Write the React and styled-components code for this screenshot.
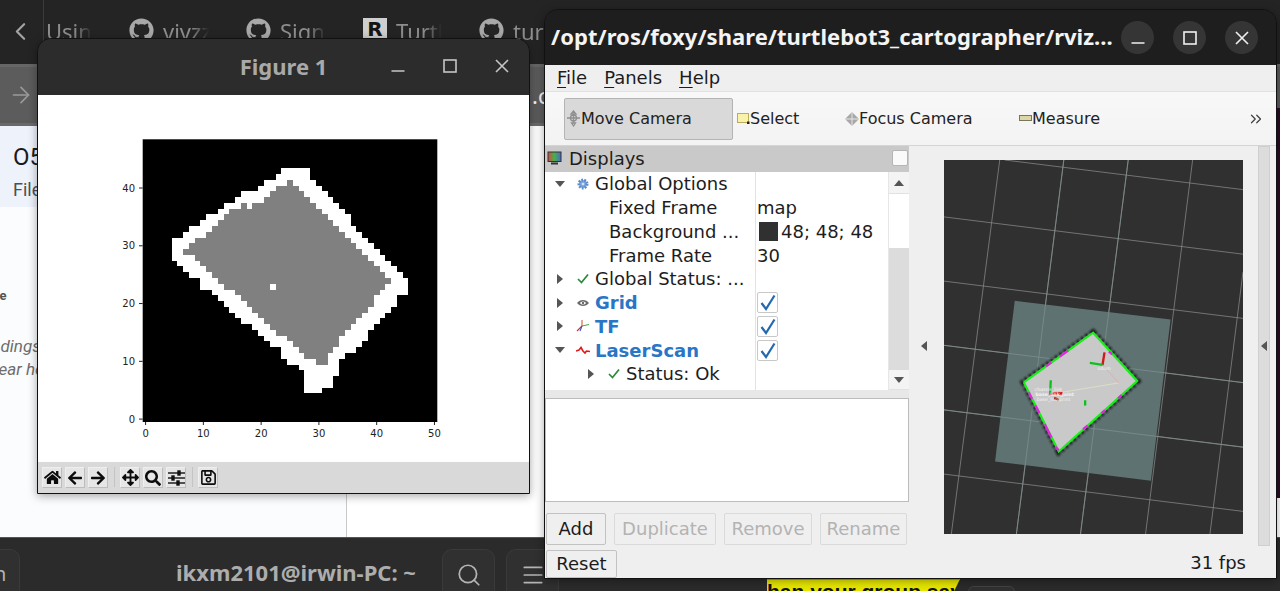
import React from 'react';
import styled, { createGlobalStyle } from 'styled-components';
import { FaGithub, FaHome, FaArrowLeft, FaArrowRight, FaArrowsAlt, FaSearch, FaRegSave } from 'react-icons/fa';
import { ChevronLeft, ChevronsRight, ArrowRight, Search, Menu } from 'lucide-react';

const GlobalStyle = createGlobalStyle`
	html, body {
		margin: 0;
		padding: 0;
		background: #242424;
	}
`;

const QT_FONT = '"DejaVu Sans", "Liberation Sans", sans-serif';
const UI_FONT = '"Noto Sans", "Open Sans", sans-serif';

const Desktop = styled.div`
	position: relative;
	width: 1280px;
	height: 591px;
	overflow: hidden;
	display: grid;
	grid-template-rows: 64px 62px 1fr 54px;
	font-family: ${UI_FONT};
`;

// Browser behind the windows
const TabBar = styled.div`
	display: flex;
	align-items: flex-start;
	background: #242424;
`;

const BackSlot = styled.div`
	width: 44px;
	height: 64px;
	flex: none;
	display: flex;
	align-items: flex-start;
	padding: 17px 0 0 6px;
	box-sizing: border-box;
	border-right: 1px solid #3b3b3b;
	color: #a4a4a4;
`;

const Tab = styled.div`
	width: ${props => props.$w}px;
	flex: none;
	height: 40px;
	padding-top: 16px;
	padding-left: ${props => props.$pad || 0}px;
	box-sizing: border-box;
	display: flex;
	gap: 9px;
	color: #8e8e8e;
	font-size: 22px;
	line-height: 30px;
	overflow: hidden;
	white-space: nowrap;
	svg {
		flex: none;
		margin-top: 2px;
		color: #a8a8a8;
	}
`;

const TabText = styled.span`
	width: 46px;
	flex: none;
	overflow: hidden;
	-webkit-mask-image: linear-gradient(90deg, #000 62%, transparent 100%);
	mask-image: linear-gradient(90deg, #000 62%, transparent 100%);
`;

const LogoBadge = styled.span`
	flex: none;
	width: 24px;
	height: 22px;
	margin-top: 2px;
	background: #cfcfcf;
	color: #151515;
	font: 700 20px/22px ${QT_FONT};
	text-align: center;
`;

const NavBar = styled.div`
	display: flex;
	align-items: center;
	padding-left: 8px;
	background: #5c5c5c;
	border-top: 3px solid #666;
	border-bottom: 3px solid #6a6a6a;
	box-sizing: border-box;
	color: #9a9a9a;
`;

const UrlTail = styled.span`
	margin-left: 498px;
	color: #f2f2f2;
	font-size: 22px;
`;

const Content = styled.div`
	display: grid;
	grid-template-columns: 347px 1fr;
	background: #fff;
	min-height: 0;
`;

const DocPane = styled.div`
	background: #fbfcfe;
	border-right: 1px solid #c9c9c9;
	overflow: hidden;
`;

const DocHeader = styled.div`
	height: 81px;
	padding: 18px 0 0 13px;
	box-sizing: border-box;
	background: #edf2fb;
`;

const DocTitle = styled.div`
	font: 400 24px/27px Roboto, sans-serif;
	color: #1b1b1b;
`;

const DocSub = styled.div`
	margin-top: 8px;
	font: 400 18px/22px Roboto, sans-serif;
	color: #4a4f57;
`;

const DocBold = styled.div`
	margin: 80px 0 0 -26px;
	font: 700 13px/18px Roboto, sans-serif;
	color: #555;
`;

const DocNote = styled.div`
	margin: 30px 0 0 -29px;
	font: italic 400 17px/23px Roboto, sans-serif;
	color: #6d6d6d;
	white-space: nowrap;
`;

const Taskbar = styled.div`
	position: relative;
	display: flex;
	align-items: flex-start;
	padding-top: 11px;
	box-sizing: border-box;
	background: #2b2b2b;
	border-top: 1px solid #555;
`;

const TaskButton = styled.div`
	width: ${props => props.$w}px;
	height: 50px;
	margin-left: ${props => props.$ml}px;
	flex: none;
	display: flex;
	justify-content: center;
	padding-top: 12px;
	box-sizing: border-box;
	background: #303030;
	border: 1px solid #3a3a3a;
	border-radius: 10px 10px 0 0;
	color: #b4b4b4;
`;

const TaskEdge = styled(TaskButton)`
	border-radius: 0 10px 0 0;
	justify-content: flex-start;
	font-size: 20px;
	line-height: 24px;
	text-indent: -6px;
	overflow: hidden;
`;

const TaskTitle = styled.div`
	margin: 10px 0 0 156px;
	width: 240px;
	flex: none;
	font-weight: 700;
	font-size: 22px;
	line-height: 27px;
	color: #adadad;
	white-space: nowrap;
`;

// Video subtitle showing under the rviz window
const Subtitle = styled.div`
	position: absolute;
	left: 767px;
	top: 41px;
	width: 193px;
	height: 12px;
	overflow: hidden;
	background: #e6e600;
	border-top: 1px solid #a8a800;
	box-sizing: border-box;
	clip-path: polygon(0 0, 100% 0, 97% 100%, 0 100%);
	color: #111;
	font: 700 21px/23px "Liberation Sans", sans-serif;
	white-space: nowrap;
	text-indent: -7px;
`;

const SubtitleChip = styled.div`
	position: absolute;
	left: 968px;
	top: 48px;
	width: 47px;
	height: 12px;
	box-sizing: border-box;
	background: #303030;
	border: 1px solid #444;
	border-radius: 6px 6px 0 0;
`;

const EdgeStrip = styled.div`
	position: absolute;
	right: 0;
	top: 108px;
	width: 4px;
	height: 390px;
	background: #2c0a24;
`;

// Generic desktop window
const Window = styled.div`
	position: absolute;
	left: ${props => props.$x}px;
	top: ${props => props.$y}px;
	width: ${props => props.$w}px;
	height: ${props => props.$h}px;
	box-sizing: border-box;
	display: flex;
	flex-direction: column;
	border: 1px solid #111;
	border-radius: 14px 14px 0 0;
	overflow: hidden;
	box-shadow: 0 2px 10px rgba(0, 0, 0, 0.35);
`;

const FigureTitleBar = styled.div`
	height: 56px;
	flex: none;
	display: grid;
	grid-template-columns: 1fr auto 1fr;
	align-items: center;
	background: #2c2c2c;
`;

const FigureTitle = styled.div`
	grid-column: 2;
	margin-top: -3px;
	font-weight: 700;
	font-size: 22px;
	color: #a9a9a9;
`;

const FigureControls = styled.div`
	justify-self: end;
	display: flex;
	gap: 34px;
	padding-right: 18px;
	margin-top: -2px;
	color: #c6c6c6;
`;

const PlotArea = styled.div`
	flex: 1;
	min-height: 0;
	background: #fff;
`;

const PlotToolbar = styled.div`
	height: 31px;
	flex: none;
	display: flex;
	align-items: flex-start;
	gap: 3px;
	padding: 5px 0 0 4px;
	box-sizing: border-box;
	background: #d9d9d9;
`;

const PlotButton = styled.div`
	width: 20px;
	height: 21px;
	box-sizing: border-box;
	display: flex;
	align-items: center;
	justify-content: center;
	background: #e6e6e6;
	border: 1px solid #efefef;
	border-bottom-color: #bdbdbd;
	border-right-color: #bdbdbd;
	color: #0c0c0c;
`;

const PlotSep = styled.div`
	width: 1px;
	height: 20px;
	margin: 0 2px 0 3px;
	background: #c4c4c4;
`;

// RViz window
const RvizTitleBar = styled.div`
	height: 55px;
	flex: none;
	display: flex;
	align-items: center;
	padding: 0 18px 0 6px;
	background: #1e1e1e;
`;

const RvizTitle = styled.div`
	flex: 1;
	margin-top: -3px;
	font-weight: 700;
	font-size: 22px;
	letter-spacing: 0.04px;
	color: #f4f4f4;
	white-space: nowrap;
`;

const RoundControls = styled.div`
	display: flex;
	gap: 19px;
`;

const RoundButton = styled.div`
	width: 33px;
	height: 33px;
	border-radius: 50%;
	background: #353535;
	color: #f0f0f0;
	display: flex;
	align-items: center;
	justify-content: center;
`;

const MenuBar = styled.div`
	height: 27px;
	flex: none;
	display: flex;
	gap: 17px;
	padding-left: 12px;
	background: #efefef;
	border-bottom: 1px solid #e2e2e2;
	box-sizing: border-box;
	font: 18px/26px ${QT_FONT};
	color: #1c1c1c;
	u {
		text-underline-offset: 3px;
	}
`;

const ToolBar = styled.div`
	height: 54px;
	flex: none;
	display: flex;
	align-items: center;
	padding-left: 19px;
	box-sizing: border-box;
	background: linear-gradient(#f8f8f8, #f3f3f3);
	border-bottom: 1px solid #d4d4d4;
	font: 16px ${QT_FONT};
	color: #222;
`;

const Tool = styled.div`
	width: ${props => props.$w}px;
	height: 42px;
	flex: none;
	margin-left: ${props => props.$ml || 0}px;
	box-sizing: border-box;
	display: flex;
	align-items: center;
	padding-left: 1px;
	border: 1px solid ${props => (props.$active ? '#b4b4b4' : 'transparent')};
	border-radius: 2px;
	background: ${props => (props.$active ? '#d9d9d9' : 'transparent')};
`;

const Overflow = styled.div`
	margin-left: auto;
	margin-right: 11px;
	display: flex;
	color: #444;
`;

const RvizMain = styled.div`
	height: 400px;
	flex: none;
	display: flex;
	background: #efefef;
`;

const LeftPanel = styled.div`
	width: 364px;
	flex: none;
	display: flex;
	flex-direction: column;
	font: 18px ${QT_FONT};
	color: #1d1d1d;
`;

const PanelHeader = styled.div`
	height: 26px;
	flex: none;
	display: flex;
	align-items: center;
	gap: 7px;
	padding: 0 1px 2px 2px;
	box-sizing: border-box;
	background: #c9c9c9;
`;

const HeaderBox = styled.div`
	margin-left: auto;
	width: 14px;
	height: 14px;
	background: #fafafa;
	border: 1px solid #b5b5b5;
	border-radius: 2px;
`;

const TreeArea = styled.div`
	height: 218px;
	flex: none;
	display: flex;
	background: #fff;
	overflow: hidden;
`;

const TreeRows = styled.div`
	flex: 1;
	min-width: 0;
	background: linear-gradient(90deg, transparent 210px, #e3e3e3 210px, #e3e3e3 211px, transparent 211px);
`;

const Row = styled.div`
	height: 23.75px;
	display: grid;
	grid-template-columns: 210px 1fr;
	align-items: center;
`;

const NameCell = styled.div`
	display: flex;
	align-items: center;
	padding-left: ${props => props.$pad}px;
	white-space: nowrap;
	overflow: hidden;
`;

const Expander = styled.span`
	width: 22px;
	flex: none;
	display: flex;
	justify-content: center;
`;

const IconSlot = styled.span`
	width: 24px;
	flex: none;
	display: flex;
	justify-content: center;
	align-items: center;
`;

const DisplayName = styled.span`
	color: #2a76c6;
	font-weight: 700;
`;

const ValueCell = styled.div`
	display: flex;
	align-items: center;
	gap: 3px;
	padding-left: 2px;
	white-space: nowrap;
`;

const Swatch = styled.span`
	width: 19px;
	height: 19px;
	margin-left: 2px;
	background: #303030;
`;

const CheckBox = styled.span`
	width: 21px;
	height: 21px;
	box-sizing: border-box;
	display: flex;
	align-items: center;
	justify-content: center;
	background: #fff;
	border: 1px solid #c8c8c8;
	border-radius: 2px;
`;

const Triangle = styled.span`
	width: 0;
	height: 0;
	border-style: solid;
	border-color: transparent;
	border-width: ${props => (props.$dir === 'down' || props.$dir === 'up' ? '6px 5.5px' : '5.5px 6px')};
	${props => (props.$dir === 'down' ? 'border-top-color: #555; border-bottom-width: 0;' : '')}
	${props => (props.$dir === 'up' ? 'border-bottom-color: #555; border-top-width: 0;' : '')}
	${props => (props.$dir === 'right' ? 'border-left-color: #555; border-right-width: 0;' : '')}
	${props => (props.$dir === 'left' ? 'border-right-color: #555; border-left-width: 0;' : '')}
`;

const ScrollBar = styled.div`
	width: 20px;
	flex: none;
	display: flex;
	flex-direction: column;
	background: #dcdcdc;
	border-left: 1px solid #e6e6e6;
	box-sizing: content-box;
`;

const ScrollStep = styled.div`
	height: ${props => props.$h}px;
	flex: none;
	display: flex;
	align-items: center;
	justify-content: center;
	background: #f4f4f4;
	border-bottom: 1px solid #e2e2e2;
	box-sizing: border-box;
`;

const ScrollTrack = styled.div`
	height: 54px;
	flex: none;
	background: #fff;
`;

const ScrollFill = styled.div`
	flex: 1;
`;

const Divider = styled.div`
	height: 8px;
	flex: none;
	background: #e8e8e8;
`;

const Description = styled.div`
	height: 104px;
	flex: none;
	box-sizing: border-box;
	background: #fff;
	border: 1px solid #bcbcbc;
`;

const ButtonRow = styled.div`
	display: flex;
	gap: 8px;
	margin: 11px 0 0 1px;
`;

const QtButton = styled.div`
	width: ${props => props.$w}px;
	height: ${props => props.$h || 32}px;
	flex: none;
	box-sizing: border-box;
	display: flex;
	align-items: center;
	justify-content: center;
	padding-bottom: 1px;
	background: #efefef;
	border: 1px solid ${props => (props.$off ? '#dadada' : '#c2c2c2')};
	border-radius: 2px;
	font: 18px ${QT_FONT};
	color: ${props => (props.$off ? '#b3b3b3' : '#1b1b1b')};
`;

const Splitter = styled.div`
	width: 35px;
	flex: none;
	display: flex;
	align-items: center;
	justify-content: center;
	padding-right: 6px;
	box-sizing: border-box;
`;

const Viewport = styled.div`
	width: 299px;
	height: 374px;
	flex: none;
	margin-top: 14px;
	background: #303030;
	svg {
		display: block;
	}
`;

const SideStrip = styled.div`
	width: 12px;
	flex: none;
	margin-left: 15px;
	display: flex;
	align-items: center;
	justify-content: center;
	background: #dcdcdc;
	border: 1px solid #cfcfcf;
	box-sizing: border-box;
`;

const StatusBar = styled.div`
	flex: 1;
	display: flex;
	align-items: flex-start;
	justify-content: space-between;
	padding: 4px 30px 0 1px;
	background: #efefef;
	font: 18px ${QT_FONT};
	color: #1b1b1b;
`;

const Fps = styled.span`
	margin-top: 1px;
	line-height: 24px;
`;

// Cells of the occupancy map, row index from the top, [start, end) columns
const WHITE_ROWS = [
	[5, 24, 29], [6, 23, 29], [7, 21, 30], [8, 20, 31], [9, 17, 32], [10, 16, 33], [11, 14, 34],
	[12, 13, 35], [13, 11, 36], [14, 10, 36], [15, 8, 37], [16, 7, 38], [17, 5, 39], [18, 5, 40],
	[19, 5, 41], [20, 5, 42], [21, 6, 43], [22, 7, 44], [23, 8, 45], [24, 10, 46], [25, 10, 46],
	[26, 12, 46], [27, 13, 44], [28, 14, 44], [29, 15, 43], [30, 16, 42], [31, 17, 41], [32, 19, 40],
	[33, 20, 39], [34, 21, 39], [35, 22, 38], [36, 24, 37], [37, 24, 35], [38, 25, 34], [39, 27, 34],
	[40, 28, 34], [41, 28, 33], [42, 28, 33], [43, 28, 31],
];

const GREY_ROWS = [
	[7, 25, 26], [8, 23, 27], [9, 22, 28], [10, 21, 29], [11, 17, 18], [11, 19, 30], [12, 15, 31],
	[13, 14, 32], [14, 13, 33], [15, 12, 34], [16, 11, 35], [17, 9, 36], [18, 8, 37], [19, 7, 38],
	[20, 9, 39], [21, 10, 40], [22, 11, 41], [23, 12, 42], [24, 13, 43], [25, 14, 22], [25, 23, 42],
	[26, 16, 41], [27, 17, 40], [28, 18, 40], [29, 19, 39], [30, 20, 38], [31, 21, 37], [32, 22, 36],
	[33, 23, 35], [34, 25, 34], [35, 26, 34], [36, 27, 33], [37, 28, 32], [38, 30, 32],
];

const CELL = 5.777;
const AX_X = 142.7;
const AX_Y = 139.3;

const OccupancyPlot = () => (
	<svg width="490" height="367" viewBox="38 95 490 367" fontFamily={QT_FONT} fontSize="10" fill="#222">
		<rect x={AX_X} y={AX_Y} width="294.6" height="282.7" fill="#000" />
		<g transform={`translate(${AX_X} ${AX_Y}) scale(${CELL})`} shapeRendering="crispEdges">
			{WHITE_ROWS.map(([r, a, b]) => (
				<rect key={`w${r}`} x={a} y={r} width={b - a} height="1" fill="#fff" />
			))}
			{GREY_ROWS.map(([r, a, b]) => (
				<rect key={`g${r}-${a}`} x={a} y={r} width={b - a} height="1" fill="#808080" />
			))}
		</g>
		{[0, 10, 20, 30, 40, 50].map(t => (
			<g key={t}>
				<line x1={145.6 + t * CELL} x2={145.6 + t * CELL} y1="422" y2="425" stroke="#222" />
				<text x={145.6 + t * CELL} y="437" textAnchor="middle">{t}</text>
			</g>
		))}
		{[0, 10, 20, 30, 40].map(t => (
			<g key={t}>
				<line x1="139" x2="142.7" y1={419.1 - t * CELL} y2={419.1 - t * CELL} stroke="#222" />
				<text x="135" y={422.8 - t * CELL} textAnchor="end">{t}</text>
			</g>
		))}
	</svg>
);

const H_LINES = [
	[300, 44, 1014, 133], [118, 215, 1014, 327], [118, 408, 1014, 520],
	[118, 601, 1014, 713], [118, 795, 1014, 907], [118, 988, 1014, 1100],
];

const V_LINES = [
	[285, 44, 140, 1168], [477, 44, 335, 1168], [670, 44, 527, 1168],
	[863, 44, 722, 1168], [1014, 380, 915, 1168],
];

const MAP_SHAPE = '565,563 697,708 462,920 357,712';

const SceneView = () => (
	<svg width="299" height="374" viewBox="118 44 896 1124" preserveAspectRatio="none">
		<defs>
			<filter id="fuzz" x="-10%" y="-10%" width="120%" height="120%">
				<feGaussianBlur stdDeviation="2.5" />
			</filter>
		</defs>
		{[...H_LINES, ...V_LINES].map(([x1, y1, x2, y2]) => (
			<line key={`${x1}-${y1}`} x1={x1} y1={y1} x2={x2} y2={y2} stroke="#8c8c8c" strokeWidth="2.2" />
		))}
		<polygon points="330,467 797,523 738,1008 271,950" fill="#5f7272" />
		{[[118, 601, 1014, 713], [118, 795, 1014, 907], [477, 44, 335, 1168], [670, 44, 527, 1168]].map(([x1, y1, x2, y2]) => (
			<line key={`o${x1}-${y1}`} x1={x1} y1={y1} x2={x2} y2={y2} stroke="#7f9090" strokeWidth="2.2" />
		))}
		<polygon points={MAP_SHAPE} fill="#c8c8c8" stroke="#141414" strokeWidth="19" strokeDasharray="10 6" filter="url(#fuzz)" />
		<polygon points={MAP_SHAPE} fill="#c9c9c9" />
		<g fill="none" strokeWidth="6.5">
			<polyline points="357,712 565,563 697,708 462,920 357,712" stroke="#18ef18" />
			<g stroke="#e820e8">
				<line x1="424" y1="664" x2="440" y2="652" />
				<line x1="465" y1="635" x2="490" y2="617" />
				<line x1="612" y1="620" x2="622" y2="628" />
				<line x1="372" y1="742" x2="382" y2="762" />
				<line x1="392" y1="782" x2="404" y2="804" />
				<line x1="420" y1="838" x2="440" y2="878" />
				<line x1="535" y1="853" x2="548" y2="842" />
				<line x1="590" y1="805" x2="600" y2="796" />
				<line x1="640" y1="760" x2="650" y2="750" />
				<line x1="452" y1="906" x2="462" y2="916" />
			</g>
		</g>
		<g strokeWidth="2">
			<line x1="434" y1="748" x2="642" y2="714" stroke="#e6e8c4" />
			<line x1="593" y1="660" x2="642" y2="714" stroke="#e0a8a0" />
		</g>
		<g strokeWidth="7">
			<line x1="434" y1="747" x2="474" y2="745" stroke="#e01010" />
			<line x1="436" y1="747" x2="438" y2="706" stroke="#10c020" />
			<line x1="593" y1="660" x2="599" y2="622" stroke="#d01818" />
			<line x1="593" y1="660" x2="555" y2="654" stroke="#10c020" />
			<line x1="448" y1="760" x2="462" y2="764" stroke="#901010" />
			<line x1="541" y1="766" x2="541" y2="782" stroke="#10c020" />
		</g>
		<g fill="#f4f4f4" fontFamily={QT_FONT} fontSize="14">
			<text x="390" y="739">chassis_link</text>
			<text x="392" y="752" fontWeight="700">base_link_joint</text>
			<text x="396" y="769">base_footprint</text>
			<text x="578" y="674">odom</text>
		</g>
	</svg>
);

const WindowGlyph = ({ kind, size = 18, bar = 13 }) => (
	<svg width={size} height={size} viewBox="0 0 18 18" fill="none" stroke="currentColor" strokeWidth="1.6">
		{kind === 'min' && <line x1={9 - bar / 2} x2={9 + bar / 2} y1="14" y2="14" />}
		{kind === 'max' && <rect x="3" y="3" width="12" height="12" />}
		{kind === 'close' && <path d="M3 3 L15 15 M15 3 L3 15" />}
	</svg>
);

const SlidersGlyph = () => (
	<svg width="17" height="16" viewBox="0 0 17 16" stroke="#111" strokeWidth="1.4" fill="#111">
		<line x1="0" x2="17" y1="3" y2="3" />
		<line x1="0" x2="17" y1="8" y2="8" />
		<line x1="0" x2="17" y1="13" y2="13" />
		<rect x="10" y="1" width="2" height="4" />
		<rect x="4" y="6" width="2" height="4" />
		<rect x="9" y="11" width="2" height="4" />
	</svg>
);

const MonitorIcon = () => (
	<svg width="15" height="15" viewBox="0 0 15 15">
		<defs>
			<linearGradient id="screen" x1="0" x2="1">
				<stop offset="0" stopColor="#d04848" />
				<stop offset="0.5" stopColor="#48b048" />
				<stop offset="1" stopColor="#4868d0" />
			</linearGradient>
		</defs>
		<rect x="1" y="1" width="13" height="9.5" fill="url(#screen)" stroke="#333" />
		<rect x="4" y="11.5" width="7" height="2" fill="#333" />
	</svg>
);

const MoveIcon = () => (
	<svg width="15" height="17" viewBox="0 0 15 17" fill="none" stroke="#8f8f8f" strokeWidth="1.3">
		<path d="M7.5 1 L5 4 H10 Z M7.5 16 L5.5 13 H9.5 Z M1 8 H14 M7.5 4 V13" />
		<circle cx="7.5" cy="8" r="3" />
	</svg>
);

const SelectIcon = () => (
	<svg width="13" height="13" viewBox="0 0 13 13">
		<rect x="0.5" y="1.5" width="11" height="9" fill="#f9f2a8" stroke="#b8ac60" />
		<rect x="10" y="9.5" width="2.5" height="2.5" fill="#222" />
	</svg>
);

const FocusIcon = () => (
	<svg width="14" height="14" viewBox="0 0 14 14">
		<polygon points="7,0 14,7 7,14 0,7" fill="#a8a8a8" />
		<path d="M7 0 V14 M0 7 H14" stroke="#e6e6e6" strokeWidth="1" />
	</svg>
);

const MeasureIcon = () => (
	<svg width="13" height="7" viewBox="0 0 13 7">
		<rect x="0.5" y="0.5" width="12" height="5" fill="#ddd6a8" stroke="#77775a" />
	</svg>
);

const GearIcon = () => (
	<svg width="12" height="12" viewBox="0 0 12 12">
		<circle cx="6" cy="6" r="4" fill="#7ea6dc" stroke="#5c8ccc" strokeWidth="3" strokeDasharray="1.6 1.2" />
		<circle cx="6" cy="6" r="1.3" fill="#cfe0f5" />
	</svg>
);

const TickIcon = () => (
	<svg width="12" height="11" viewBox="0 0 12 11" fill="none" stroke="#2c8a3c" strokeWidth="1.7">
		<path d="M1 6 L4.5 9.5 L11 1.5" />
	</svg>
);

const EyeIcon = () => (
	<svg width="12" height="8" viewBox="0 0 12 8" fill="#6a6a6a">
		<path d="M0 4 C3 0 9 0 12 4 C9 8 3 8 0 4 Z M3 4 C4.5 6 7.5 6 9 4 C7.5 2 4.5 2 3 4 Z" fillRule="evenodd" />
		<circle cx="6" cy="4" r="1.2" />
	</svg>
);

const AxesIcon = () => (
	<svg width="14" height="14" viewBox="0 0 14 14" fill="none" strokeWidth="1.1">
		<path d="M6 7 L1 12" stroke="#d03030" />
		<path d="M6 7 L6 1" stroke="#d06030" />
		<path d="M6 7 L13 5.5" stroke="#40b040" />
		<path d="M6 7 L4 12" stroke="#4050d0" />
	</svg>
);

const ScanIcon = () => (
	<svg width="14" height="9" viewBox="0 0 14 9" fill="none" stroke="#e01818" strokeWidth="1.6">
		<path d="M0 5 L3 4 L5 1.5 L7 5 L9 7 L10.5 5 L14 5.5" />
	</svg>
);

const BlueTick = () => (
	<svg width="16" height="17" viewBox="0 0 16 17" fill="none" stroke="#2468b0" strokeWidth="2.2">
		<path d="M1.5 9 L6 15 L14.5 1.5" />
	</svg>
);

const tree_rows = [
	{ name: 'Global Options', arrow: 'down', icon: <GearIcon />, pad: 4 },
	{ name: 'Fixed Frame', pad: 64, value: 'map' },
	{ name: 'Background ...', pad: 64, value: '48; 48; 48', swatch: true },
	{ name: 'Frame Rate', pad: 64, value: '30' },
	{ name: 'Global Status: ...', arrow: 'right', icon: <TickIcon />, pad: 4 },
	{ name: 'Grid', arrow: 'right', icon: <EyeIcon />, pad: 4, display: true },
	{ name: 'TF', arrow: 'right', icon: <AxesIcon />, pad: 4, display: true },
	{ name: 'LaserScan', arrow: 'down', icon: <ScanIcon />, pad: 4, display: true },
	{ name: 'Status: Ok', arrow: 'right', icon: <TickIcon />, pad: 35 },
	{ name: 'Topic', pad: 64 },
];

const App = () => (
	<Desktop>
		<GlobalStyle />
		<TabBar>
			<BackSlot>
				<ChevronLeft size={29} strokeWidth={1.8} />
			</BackSlot>
			<Tab $w={85} $pad={2}><TabText>Using</TabText></Tab>
			<Tab $w={117}><FaGithub size={25} /><TabText>vivzz</TabText></Tab>
			<Tab $w={117}><FaGithub size={25} /><TabText>Sign</TabText></Tab>
			<Tab $w={116}><LogoBadge>R</LogoBadge><TabText>Turtl</TabText></Tab>
			<Tab $w={117}><FaGithub size={25} /><TabText>turtl</TabText></Tab>
		</TabBar>
		<NavBar>
			<ArrowRight size={26} strokeWidth={1.5} />
			<UrlTail>.c</UrlTail>
		</NavBar>
		<Content>
			<DocPane>
				<DocHeader>
					<DocTitle>O5</DocTitle>
					<DocSub>File</DocSub>
				</DocHeader>
				<DocBold>name</DocBold>
				<DocNote>
					Headings
					<br />
					appear here
				</DocNote>
			</DocPane>
			<div />
		</Content>
		<Taskbar>
			<TaskEdge $w={21} $ml={-1}>n</TaskEdge>
			<TaskTitle>ikxm2101@irwin-PC: ~</TaskTitle>
			<TaskButton $w={53} $ml={26}><Search size={26} strokeWidth={1.6} /></TaskButton>
			<TaskButton $w={53} $ml={11}><Menu size={26} strokeWidth={1.6} /></TaskButton>
			<Subtitle>than your group says</Subtitle>
			<SubtitleChip />
		</Taskbar>
		<EdgeStrip />

		<Window $x={37} $y={38} $w={493} $h={456}>
			<FigureTitleBar>
				<FigureTitle>Figure 1</FigureTitle>
				<FigureControls>
					<WindowGlyph kind="min" />
					<WindowGlyph kind="max" />
					<WindowGlyph kind="close" />
				</FigureControls>
			</FigureTitleBar>
			<PlotArea>
				<OccupancyPlot />
			</PlotArea>
			<PlotToolbar>
				<PlotButton><FaHome size={17} /></PlotButton>
				<PlotButton><FaArrowLeft size={16} /></PlotButton>
				<PlotButton><FaArrowRight size={16} /></PlotButton>
				<PlotSep />
				<PlotButton><FaArrowsAlt size={17} /></PlotButton>
				<PlotButton><FaSearch size={16} /></PlotButton>
				<PlotButton><SlidersGlyph /></PlotButton>
				<PlotSep />
				<PlotButton><FaRegSave size={17} /></PlotButton>
			</PlotToolbar>
		</Window>

		<Window $x={544} $y={9} $w={733} $h={570}>
			<RvizTitleBar>
				<RvizTitle>/opt/ros/foxy/share/turtlebot3_cartographer/rviz...</RvizTitle>
				<RoundControls>
					<RoundButton><WindowGlyph kind="min" /></RoundButton>
					<RoundButton><WindowGlyph kind="max" /></RoundButton>
					<RoundButton><WindowGlyph kind="close" /></RoundButton>
				</RoundControls>
			</RvizTitleBar>
			<MenuBar>
				<span><u>F</u>ile</span>
				<span><u>P</u>anels</span>
				<span><u>H</u>elp</span>
			</MenuBar>
			<ToolBar>
				<Tool $w={169} $active><MoveIcon />Move Camera</Tool>
				<Tool $w={108} $ml={2}><SelectIcon />Select</Tool>
				<Tool $w={174}><FocusIcon />Focus Camera</Tool>
				<Tool $w={120}><MeasureIcon />Measure</Tool>
				<Overflow><ChevronsRight size={18} strokeWidth={1.7} /></Overflow>
			</ToolBar>
			<RvizMain>
				<LeftPanel>
					<PanelHeader>
						<MonitorIcon />
						Displays
						<HeaderBox />
					</PanelHeader>
					<TreeArea>
						<TreeRows>
							{tree_rows.map(row => (
								<Row key={row.name}>
									<NameCell $pad={row.pad}>
										{row.arrow && <Expander><Triangle $dir={row.arrow} /></Expander>}
										{row.icon && <IconSlot>{row.icon}</IconSlot>}
										{row.display ? <DisplayName>{row.name}</DisplayName> : row.name}
									</NameCell>
									<ValueCell>
										{row.display && <CheckBox><BlueTick /></CheckBox>}
										{row.swatch && <Swatch />}
										{row.value}
									</ValueCell>
								</Row>
							))}
						</TreeRows>
						<ScrollBar>
							<ScrollStep $h={22}><Triangle $dir="up" /></ScrollStep>
							<ScrollTrack />
							<ScrollFill />
							<ScrollStep $h={20}><Triangle $dir="down" /></ScrollStep>
						</ScrollBar>
					</TreeArea>
					<Divider />
					<Description />
					<ButtonRow>
						<QtButton $w={60}>Add</QtButton>
						<QtButton $w={102} $off>Duplicate</QtButton>
						<QtButton $w={88} $off>Remove</QtButton>
						<QtButton $w={87} $off>Rename</QtButton>
					</ButtonRow>
				</LeftPanel>
				<Splitter>
					<Triangle $dir="left" />
				</Splitter>
				<Viewport>
					<SceneView />
				</Viewport>
				<SideStrip>
					<Triangle $dir="left" />
				</SideStrip>
			</RvizMain>
			<StatusBar>
				<QtButton $w={71} $h={28}>Reset</QtButton>
				<Fps>31 fps</Fps>
			</StatusBar>
		</Window>
	</Desktop>
);

export default App;
